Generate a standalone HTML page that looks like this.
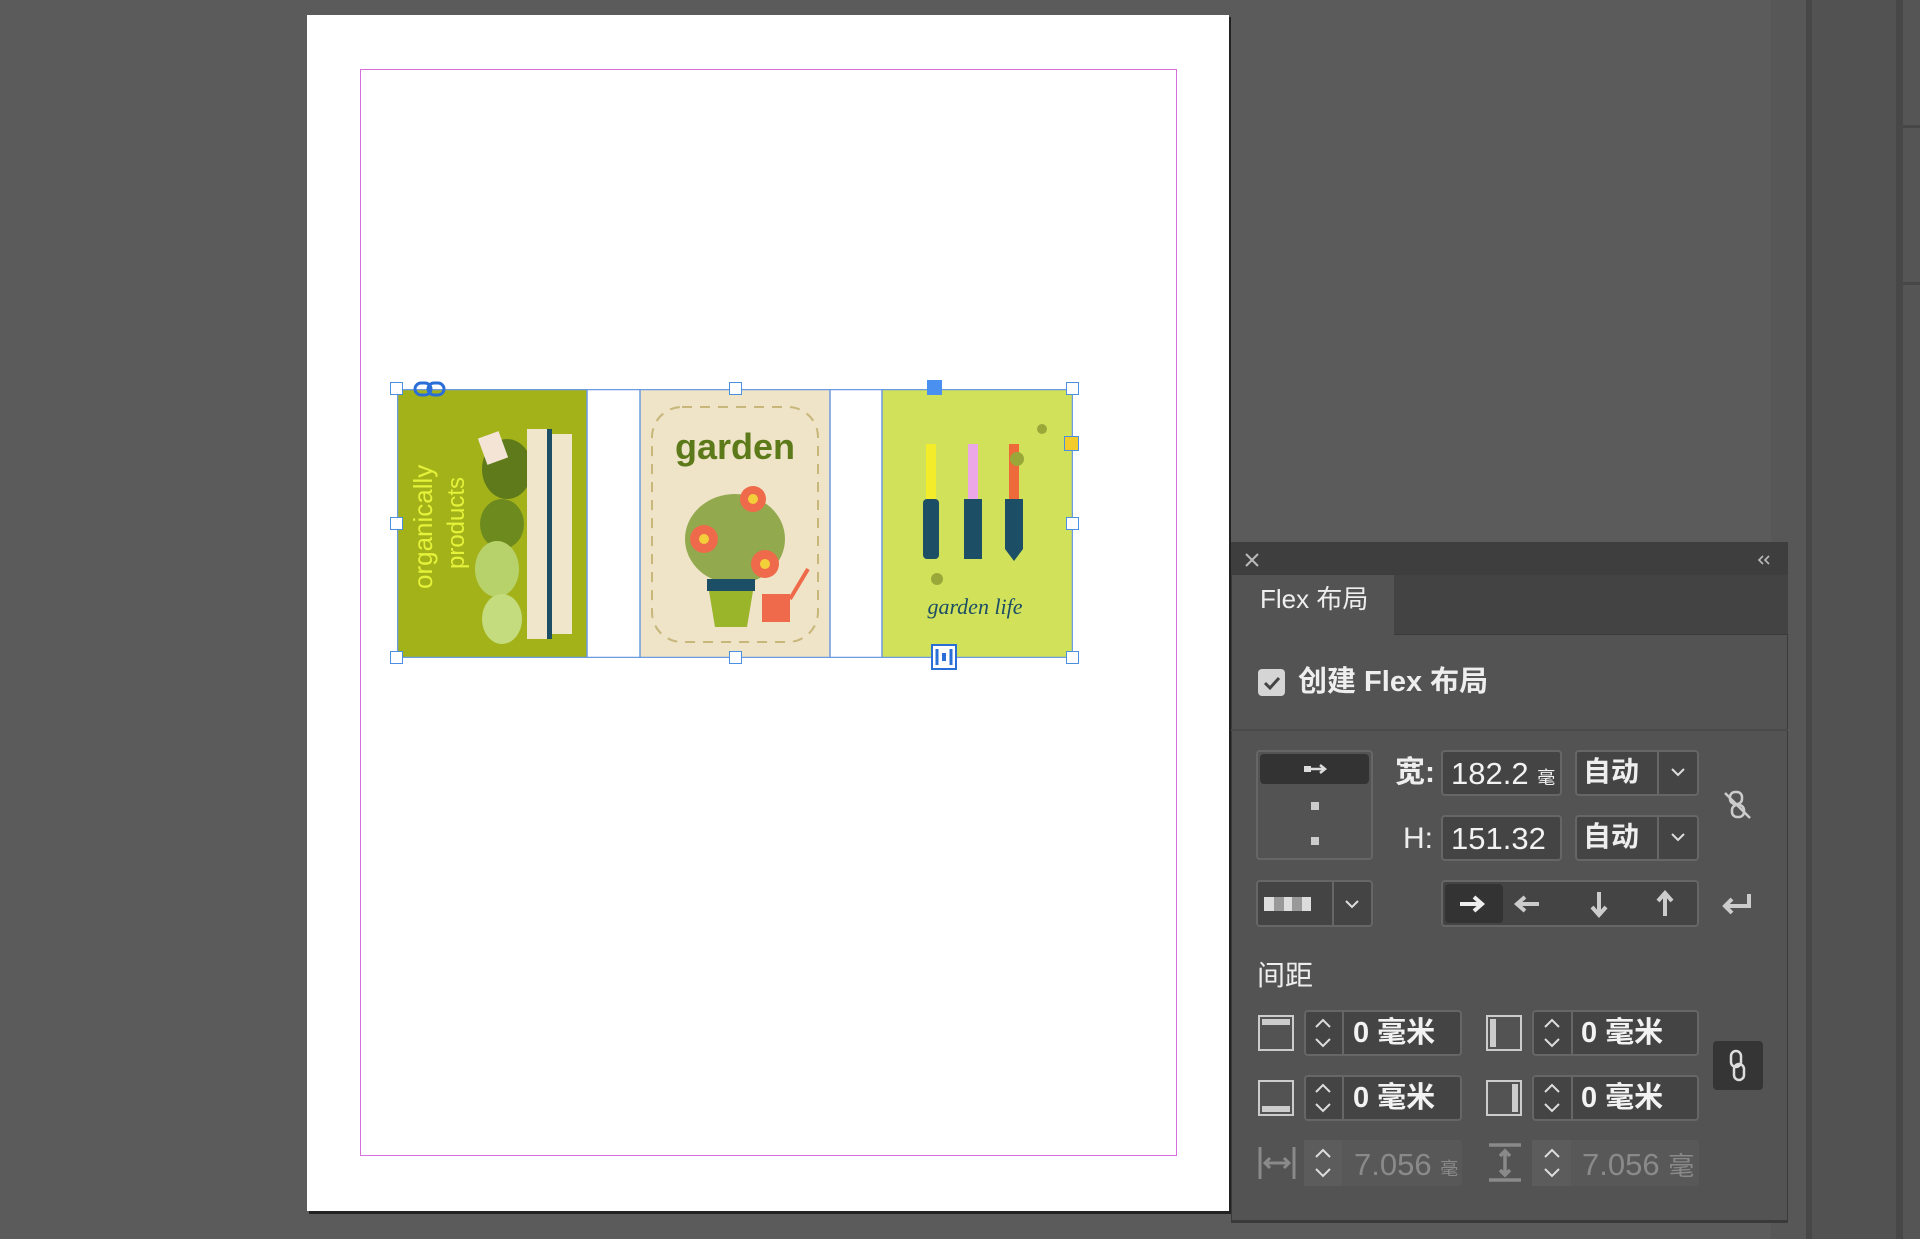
<!DOCTYPE html>
<html><head><meta charset="utf-8"><style>
*{margin:0;padding:0;box-sizing:border-box}
body{width:1920px;height:1239px;background:#5b5b5b;position:relative;overflow:hidden;font-family:"Liberation Sans","Noto Sans CJK SC",sans-serif;color:#e8e8e8}
.a{position:absolute}
.box{position:absolute;background:#444;border:2px solid #666;border-radius:4px}
.t{position:absolute;white-space:nowrap;line-height:1}
.h{position:absolute;width:13px;height:13px;background:#fff;border:1.5px solid #4a8fe0}
</style></head><body>
<div class="a" style="left:1771px;top:0;width:35px;height:1239px;background:#575757"></div>
<div class="a" style="left:1806px;top:0;width:6px;height:1239px;background:#474747"></div>
<div class="a" style="left:1812px;top:0;width:84px;height:1239px;background:#525252"></div>
<div class="a" style="left:1896px;top:0;width:7px;height:1239px;background:#474747"></div>
<div class="a" style="left:1903px;top:0;width:17px;height:1239px;background:#555"></div>
<div class="a" style="left:1903px;top:125px;width:17px;height:3px;background:#474747"></div>
<div class="a" style="left:1903px;top:282px;width:17px;height:3px;background:#474747"></div>
<div class="a" style="left:309px;top:17px;width:922px;height:1197px;background:#222"></div>
<div class="a" style="left:307px;top:15px;width:922px;height:1196px;background:#fff"></div>
<div class="a" style="left:360px;top:69px;width:817px;height:1087px;border:1.5px solid #d86ee0"></div>
<svg class="a" style="left:397px;top:389px" width="676" height="269" viewBox="0 0 676 269">
<rect x="0" y="0" width="190" height="269" fill="#a4b21a"/>
<g transform="translate(35,200) rotate(-90)"><text x="0" y="0" font-family="Liberation Sans" font-size="26" fill="#e5f23a">organically</text><text x="20" y="32" font-family="Liberation Sans" font-size="24" fill="#e5f23a">products</text></g>
<ellipse cx="110" cy="80" rx="25" ry="30" fill="#5f7a1a"/><ellipse cx="105" cy="135" rx="22" ry="25" fill="#6d8a1e"/>
<ellipse cx="100" cy="180" rx="22" ry="28" fill="#b7d26a"/><ellipse cx="105" cy="230" rx="20" ry="25" fill="#c5dc7e"/>
<rect x="130" y="40" width="20" height="210" fill="#efe6cc"/><rect x="150" y="40" width="5" height="210" fill="#1c4e66"/><rect x="155" y="45" width="20" height="200" fill="#efe6cc"/>
<rect x="85" y="45" width="22" height="28" fill="#f3e4d6" transform="rotate(-20 96 59)"/>
<rect x="243" y="0" width="190" height="269" fill="#efe3c8"/>
<rect x="255" y="18" width="166" height="235" rx="30" fill="none" stroke="#c7b77a" stroke-width="2" stroke-dasharray="10 8"/>
<text x="338" y="70" text-anchor="middle" font-family="Liberation Sans" font-weight="bold" font-size="36" fill="#5d7a1a">garden</text>
<ellipse cx="338" cy="150" rx="50" ry="45" fill="#7a9a30" opacity=".8"/>
<circle cx="307" cy="150" r="14" fill="#ef6a4a"/><circle cx="356" cy="110" r="13" fill="#ef6a4a"/><circle cx="368" cy="175" r="14" fill="#ef6a4a"/>
<circle cx="307" cy="150" r="5" fill="#f3d03a"/><circle cx="356" cy="110" r="5" fill="#f3d03a"/><circle cx="368" cy="175" r="5" fill="#f3d03a"/>
<rect x="310" y="190" width="48" height="12" fill="#1c4e66"/><path d="M312 202h44l-6 36h-32z" fill="#9ab52a"/>
<path d="M365 205h28v28h-28z" fill="#ef6a4a"/><path d="M393 210l18-30" stroke="#ef6a4a" stroke-width="4"/>
<rect x="485" y="0" width="191" height="269" fill="#d1e25a"/>
<g fill="#1c4e66"><rect x="526" y="110" width="16" height="60" rx="4"/><rect x="567" y="110" width="18" height="60"/><path d="M608 110h18v50l-9 12-9-12z"/></g>
<rect x="529" y="55" width="10" height="55" fill="#f3ec2a"/><rect x="571" y="55" width="10" height="55" fill="#eca8e6"/><rect x="612" y="55" width="10" height="55" fill="#ef6a3a"/>
<circle cx="540" cy="190" r="6" fill="#9aa83a"/><circle cx="620" cy="70" r="7" fill="#9aa83a"/><circle cx="645" cy="40" r="5" fill="#9aa83a"/>
<text x="578" y="225" text-anchor="middle" font-family="Liberation Serif" font-style="italic" font-size="22" fill="#1c4e66">garden life</text>
<rect x="0.5" y="0.5" width="675" height="268" fill="none" stroke="#6b9be0" stroke-width="1.5"/>
<line x1="190" y1="0" x2="190" y2="269" stroke="#6b9be0" stroke-width="1.5"/><line x1="243" y1="0" x2="243" y2="269" stroke="#6b9be0" stroke-width="1.5"/>
<line x1="433" y1="0" x2="433" y2="269" stroke="#6b9be0" stroke-width="1.5"/><line x1="485" y1="0" x2="485" y2="269" stroke="#6b9be0" stroke-width="1.5"/>
</svg>
<div class="h" style="left:390px;top:382px"></div><div class="h" style="left:729px;top:382px"></div><div class="h" style="left:1066px;top:382px"></div>
<div class="h" style="left:390px;top:517px"></div><div class="h" style="left:1066px;top:517px"></div>
<div class="h" style="left:390px;top:651px"></div><div class="h" style="left:729px;top:651px"></div><div class="h" style="left:1066px;top:651px"></div>
<div class="a" style="left:927px;top:380px;width:15px;height:15px;background:#4a90f0"></div>
<div class="a" style="left:1064px;top:436px;width:15px;height:15px;background:#f3cc2a;border:1.5px solid #4a8fe0"></div>
<svg class="a" style="left:413px;top:380px" width="34" height="18"><rect x="2" y="3" width="16" height="12" rx="6" fill="none" stroke="#2a6fd8" stroke-width="3"/><rect x="15" y="3" width="16" height="12" rx="6" fill="none" stroke="#2a6fd8" stroke-width="3"/></svg>
<svg class="a" style="left:930px;top:643px" width="28" height="28"><rect x="2" y="2" width="24" height="24" fill="#fff" stroke="#2a6fd8" stroke-width="2"/><path d="M7 6v16M21 6v16" stroke="#2a6fd8" stroke-width="3"/><rect x="12" y="10" width="4" height="8" fill="#2a6fd8"/></svg>
<!-- panel -->
<div class="a" style="left:1231px;top:542px;width:557px;height:680px;background:#535353;border:1px solid #3a3a3a"></div>
<div class="a" style="left:1231px;top:542px;width:557px;height:33px;background:#3e3e3e"></div>
<div class="a" style="left:1394px;top:575px;width:394px;height:60px;background:#434343;border-bottom:1px solid #3a3a3a"></div>
<svg class="a" style="left:1244px;top:552px" width="16" height="16"><path d="M2 2l12 12M14 2L2 14" stroke="#bbb" stroke-width="2"/></svg>
<svg class="a" style="left:1756px;top:553px" width="16" height="14"><path d="M7 3L3 7l4 4M13 3L9 7l4 4" stroke="#bbb" stroke-width="1.6" fill="none"/></svg>
<div class="t" style="left:1260px;top:586px;font-size:26px;color:#eee">Flex 布局</div>
<div class="a" style="left:1258px;top:669px;width:27px;height:27px;background:#d5d5d5;border-radius:4px"></div>
<svg class="a" style="left:1258px;top:669px" width="27" height="27"><path d="M7 14l5 5 9-10" stroke="#444" stroke-width="3" fill="none"/></svg>
<div class="t" style="left:1298px;top:668px;font-size:29px;color:#eee;font-weight:bold">创建 Flex 布局</div>
<div class="a" style="left:1231px;top:729px;width:557px;height:2px;background:#4a4a4a"></div>
<div class="a" style="left:1256px;top:750px;width:117px;height:110px;border:2px solid #666;border-radius:4px"></div>
<div class="a" style="left:1260px;top:754px;width:109px;height:30px;background:#333;border-radius:4px"></div>
<svg class="a" style="left:1302px;top:762px" width="28" height="14"><rect x="2" y="4" width="7" height="6" fill="#ddd"/><path d="M9 7h13M18 3l5 4-5 4" stroke="#ddd" stroke-width="2.5" fill="none"/></svg>
<div class="a" style="left:1311px;top:802px;width:8px;height:8px;background:#ccc"></div>
<div class="a" style="left:1311px;top:837px;width:8px;height:8px;background:#ccc"></div>
<div class="t" style="left:1395px;top:758px;font-size:30px;color:#eee;font-weight:bold">宽:</div>
<div class="box" style="left:1441px;top:750px;width:121px;height:46px"></div>
<div class="t" style="left:1451px;top:758px;font-size:31px;color:#f2f2f2">182.2 <span style="font-size:18px">毫</span></div>
<div class="box" style="left:1575px;top:750px;width:124px;height:46px"></div>
<div class="a" style="left:1657px;top:752px;width:2px;height:42px;background:#666"></div>
<div class="t" style="left:1583px;top:758px;font-size:28px;color:#eee;font-weight:bold">自动</div>
<svg class="a" style="left:1670px;top:766px" width="16" height="12"><path d="M2 3l6 6 6-6" stroke="#ddd" stroke-width="2" fill="none"/></svg>
<div class="t" style="left:1403px;top:824px;font-size:30px;color:#eee">H:</div>
<div class="box" style="left:1441px;top:815px;width:121px;height:46px"></div>
<div class="t" style="left:1451px;top:823px;font-size:31px;color:#f2f2f2">151.32</div>
<div class="box" style="left:1575px;top:815px;width:124px;height:46px"></div>
<div class="a" style="left:1657px;top:817px;width:2px;height:42px;background:#666"></div>
<div class="t" style="left:1583px;top:823px;font-size:28px;color:#eee;font-weight:bold">自动</div>
<svg class="a" style="left:1670px;top:831px" width="16" height="12"><path d="M2 3l6 6 6-6" stroke="#ddd" stroke-width="2" fill="none"/></svg>
<svg class="a" style="left:1722px;top:788px" width="32" height="34"><rect x="8" y="4" width="12" height="12" rx="5" fill="none" stroke="#ccc" stroke-width="2.5"/><rect x="10" y="17" width="12" height="12" rx="5" fill="none" stroke="#ccc" stroke-width="2.5"/><path d="M3 5l25 25" stroke="#ccc" stroke-width="2.5"/></svg>
<div class="box" style="left:1256px;top:880px;width:117px;height:47px"></div>
<div class="a" style="left:1332px;top:882px;width:2px;height:43px;background:#666"></div>
<div class="a" style="left:1264px;top:897px;width:47px;height:14px;background:#ddd"></div>
<div class="a" style="left:1274px;top:897px;width:10px;height:14px;background:#999"></div><div class="a" style="left:1292px;top:897px;width:10px;height:14px;background:#999"></div>
<svg class="a" style="left:1344px;top:898px" width="16" height="12"><path d="M2 3l6 6 6-6" stroke="#ddd" stroke-width="2" fill="none"/></svg>
<div class="box" style="left:1441px;top:880px;width:258px;height:47px"></div>
<div class="a" style="left:1445px;top:884px;width:58px;height:39px;background:#333;border-radius:4px"></div>
<svg class="a" style="left:1445px;top:884px" width="310" height="40">
<path d="M15 20h22M29 13l8 7-8 7" stroke="#eee" stroke-width="4" fill="none"/>
<path d="M94 20h-22M80 13l-8 7 8 7" stroke="#ccc" stroke-width="4" fill="none"/>
<path d="M154 8v22M147 23l7 8 7-8" stroke="#ccc" stroke-width="4" fill="none"/>
<path d="M220 32v-22M213 17l7-8 7 8" stroke="#ccc" stroke-width="4" fill="none"/>
<path d="M304 10v12h-24M287 15l-7 7 7 7" stroke="#ccc" stroke-width="4" fill="none"/>
</svg>
<div class="t" style="left:1257px;top:962px;font-size:28px;color:#eee">间距</div>
<div class="a" style="left:1258px;top:1015px;width:36px;height:36px;border:2px solid #ccc"></div><div class="a" style="left:1262px;top:1019px;width:28px;height:6px;background:#ccc"></div>
<div class="a" style="left:1486px;top:1015px;width:36px;height:36px;border:2px solid #ccc"></div><div class="a" style="left:1490px;top:1019px;width:6px;height:28px;background:#ccc"></div>
<div class="a" style="left:1258px;top:1080px;width:36px;height:36px;border:2px solid #ccc"></div><div class="a" style="left:1262px;top:1106px;width:28px;height:6px;background:#ccc"></div>
<div class="a" style="left:1486px;top:1080px;width:36px;height:36px;border:2px solid #ccc"></div><div class="a" style="left:1512px;top:1084px;width:6px;height:28px;background:#ccc"></div>
<div class="box" style="left:1304px;top:1010px;width:158px;height:46px"></div><div class="a" style="left:1342px;top:1012px;width:2px;height:42px;background:#666"></div>
<div class="box" style="left:1532px;top:1010px;width:167px;height:46px"></div><div class="a" style="left:1571px;top:1012px;width:2px;height:42px;background:#666"></div>
<div class="box" style="left:1304px;top:1075px;width:158px;height:46px"></div><div class="a" style="left:1342px;top:1077px;width:2px;height:42px;background:#666"></div>
<div class="box" style="left:1532px;top:1075px;width:167px;height:46px"></div><div class="a" style="left:1571px;top:1077px;width:2px;height:42px;background:#666"></div>
<div class="a" style="left:1304px;top:1140px;width:158px;height:46px;background:#585858;border-radius:4px"></div><div class="a" style="left:1304px;top:1140px;width:38px;height:46px;background:#5c5c5c"></div>
<div class="a" style="left:1532px;top:1140px;width:167px;height:46px;background:#585858;border-radius:4px"></div><div class="a" style="left:1532px;top:1140px;width:39px;height:46px;background:#5c5c5c"></div>
<svg class="a" style="left:1313px;top:1015px" width="20" height="36"><path d="M3 12l7-7 7 7M3 24l7 7 7-7" stroke="#ddd" stroke-width="2" fill="none"/></svg>
<svg class="a" style="left:1542px;top:1015px" width="20" height="36"><path d="M3 12l7-7 7 7M3 24l7 7 7-7" stroke="#ddd" stroke-width="2" fill="none"/></svg>
<svg class="a" style="left:1313px;top:1080px" width="20" height="36"><path d="M3 12l7-7 7 7M3 24l7 7 7-7" stroke="#ddd" stroke-width="2" fill="none"/></svg>
<svg class="a" style="left:1542px;top:1080px" width="20" height="36"><path d="M3 12l7-7 7 7M3 24l7 7 7-7" stroke="#ddd" stroke-width="2" fill="none"/></svg>
<svg class="a" style="left:1313px;top:1145px" width="20" height="36"><path d="M3 12l7-7 7 7M3 24l7 7 7-7" stroke="#ddd" stroke-width="2" fill="none"/></svg>
<svg class="a" style="left:1542px;top:1145px" width="20" height="36"><path d="M3 12l7-7 7 7M3 24l7 7 7-7" stroke="#ddd" stroke-width="2" fill="none"/></svg>
<div class="t" style="left:1353px;top:1019px;font-size:29px;color:#f2f2f2;font-weight:bold">0 毫米</div>
<div class="t" style="left:1581px;top:1019px;font-size:29px;color:#f2f2f2;font-weight:bold">0 毫米</div>
<div class="t" style="left:1353px;top:1084px;font-size:29px;color:#f2f2f2;font-weight:bold">0 毫米</div>
<div class="t" style="left:1581px;top:1084px;font-size:29px;color:#f2f2f2;font-weight:bold">0 毫米</div>
<div class="t" style="left:1354px;top:1149px;font-size:31px;color:#8a8a8a">7.056 <span style="font-size:18px">毫</span></div>
<div class="t" style="left:1582px;top:1149px;font-size:31px;color:#8a8a8a">7.056 <span style="font-size:26px">毫</span></div>
<svg class="a" style="left:1257px;top:1143px" width="40" height="40"><path d="M3 4v32M37 4v32M9 20h22M13 15l-5 5 5 5M27 15l5 5-5 5" stroke="#8a8a8a" stroke-width="3" fill="none"/></svg>
<svg class="a" style="left:1487px;top:1142px" width="36" height="42"><path d="M2 3h32M2 38h32M18 9v24M13 14l5-5 5 5M13 28l5 5 5-5" stroke="#8a8a8a" stroke-width="3.5" fill="none"/></svg>
<div class="a" style="left:1713px;top:1041px;width:50px;height:49px;background:#353535;border-radius:4px"></div>
<svg class="a" style="left:1726px;top:1048px" width="24" height="36"><rect x="5" y="3" width="10" height="16" rx="5" fill="none" stroke="#ddd" stroke-width="2.5"/><rect x="8" y="16" width="10" height="16" rx="5" fill="none" stroke="#ddd" stroke-width="2.5"/></svg>
<div class="a" style="left:1231px;top:1220px;width:557px;height:3px;background:#3a3a3a"></div>
</body></html>
